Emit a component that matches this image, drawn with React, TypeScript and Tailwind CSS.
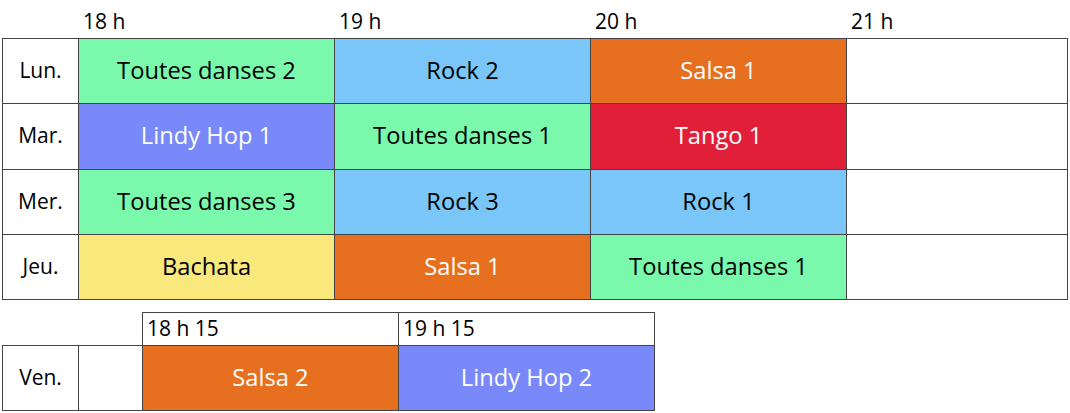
import React from "react";

type Course = { name: string; bg: string; light?: boolean };

const green = "bg-[#7af9ad]";
const blue = "bg-[#7ac6f9]";
const orange = "bg-[#e76f20]";
const purple = "bg-[#7989f9]";
const red = "bg-[#e21f38]";
const yellow = "bg-[#f9e87b]";

const week: { day: string; h: string; courses: Course[] }[] = [
  {
    day: "Lun.",
    h: "h-[65px]",
    courses: [
      { name: "Toutes danses 2", bg: green },
      { name: "Rock 2", bg: blue },
      { name: "Salsa 1", bg: orange, light: true },
    ],
  },
  {
    day: "Mar.",
    h: "h-[66px]",
    courses: [
      { name: "Lindy Hop 1", bg: purple, light: true },
      { name: "Toutes danses 1", bg: green },
      { name: "Tango 1", bg: red, light: true },
    ],
  },
  {
    day: "Mer.",
    h: "h-[65px]",
    courses: [
      { name: "Toutes danses 3", bg: green },
      { name: "Rock 3", bg: blue },
      { name: "Rock 1", bg: blue },
    ],
  },
  {
    day: "Jeu.",
    h: "h-[65px]",
    courses: [
      { name: "Bachata", bg: yellow },
      { name: "Salsa 1", bg: orange, light: true },
      { name: "Toutes danses 1", bg: green },
    ],
  },
];

const hours = ["18 h", "19 h", "20 h", "21 h"];

const CourseCell = ({ c }: { c: Course }) => (
  <div
    className={`w-[256px] shrink-0 border-r border-[#444] flex items-center justify-center text-[23.7px] leading-none pb-[1px] ${c.bg} ${
      c.light ? "text-white" : "text-black"
    }`}
  >
    {c.name}
  </div>
);

export default function App() {
  return (
    <div
      className="bg-white w-[1070px] h-[413px] pl-[2px] text-black"
      style={{ fontFamily: '"Open Sans", "Noto Sans", sans-serif' }}
    >
      {/* hour labels */}
      <div className="flex h-[38px] pl-[81px] items-end pb-[6px] text-[21px] leading-none">
        {hours.map((h) => (
          <span key={h} className="w-[256px] shrink-0">
            {h}
          </span>
        ))}
      </div>

      {/* main week */}
      <div className="w-[1066px] border-l border-t border-[#444]">
        {week.map((row) => (
          <div key={row.day} className={`flex border-b border-[#444] ${row.h}`}>
            <div className="w-[76px] shrink-0 border-r border-[#444] flex items-center justify-center text-[21px] leading-none pb-[2px]">
              {row.day}
            </div>
            {row.courses.map((c, i) => (
              <CourseCell key={i} c={c} />
            ))}
            <div className="w-[221px] shrink-0 border-r border-[#444]" />
          </div>
        ))}
      </div>

      {/* friday */}
      <div className="mt-[12px] flex pl-[140px]">
        {["18 h 15", "19 h 15"].map((h, i) => (
          <div
            key={h}
            className={`w-[256px] h-[33px] shrink-0 border-t border-r border-[#444] pl-[4px] flex items-center text-[21px] leading-none pb-[2px] ${
              i === 0 ? "border-l w-[257px]" : ""
            }`}
          >
            {h}
          </div>
        ))}
      </div>
      <div className="flex w-[653px] border-l border-t border-b border-[#444] h-[66px]">
        <div className="w-[76px] shrink-0 border-r border-[#444] flex items-center justify-center text-[21px] leading-none pb-[2px]">
          Ven.
        </div>
        <div className="w-[64px] shrink-0 border-r border-[#444]" />
        <CourseCell c={{ name: "Salsa 2", bg: orange, light: true }} />
        <CourseCell c={{ name: "Lindy Hop 2", bg: purple, light: true }} />
      </div>
    </div>
  );
}
